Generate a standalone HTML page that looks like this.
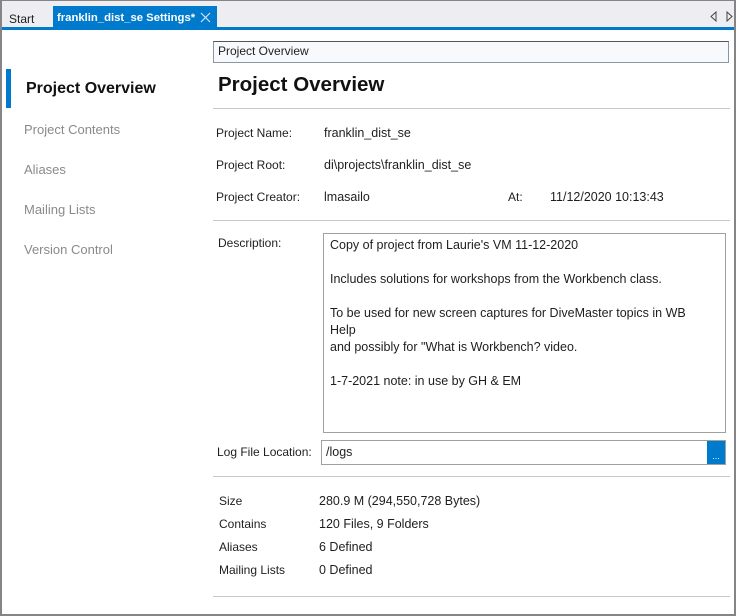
<!DOCTYPE html>
<html><head><style>
*{margin:0;padding:0;box-sizing:border-box}
body{width:736px;height:616px;position:relative;background:#fff;font-family:"Liberation Sans",sans-serif;color:#1e1e1e;overflow:hidden}
.a{position:absolute;white-space:nowrap}
.l{font-size:12px;line-height:15px}
.v{font-size:12.5px;line-height:15px}
.hr{position:absolute;left:213px;width:517px;height:1px;background:#c8c8c8}
.nav{position:absolute;left:24px;font-size:13px;color:#8a8a8a}
</style></head><body>
<div class="a" style="left:0;top:0;width:736px;height:616px;border:2px solid #858585;border-top:1px solid #858585"></div>
<div class="a" style="left:2px;top:1px;width:732px;height:26px;background:#eeeef2"></div>
<div class="a" style="left:2px;top:27px;width:732px;height:3px;background:#007acc"></div>
<div class="a l" style="left:9px;top:12px;color:#1e1e1e">Start</div>
<div class="a" style="left:53px;top:6px;width:164px;height:22px;background:#007acc"></div>
<div class="a" style="left:57px;top:12px;font-size:11.3px;font-weight:bold;color:#fff">franklin_dist_se Settings*</div>
<svg class="a" style="left:200px;top:12px" width="11" height="11"><path d="M1 1L10 10M10 1L1 10" stroke="#d0e6f5" stroke-width="1.2"/></svg>
<svg class="a" style="left:710px;top:11px" width="24" height="11"><path d="M6 1L1 5.5L6 10Z M17 1L22 5.5L17 10Z" fill="none" stroke="#444"/></svg>

<div class="a" style="left:6px;top:69px;width:5px;height:39px;background:#007acc"></div>
<div class="a" style="left:26px;top:80px;font-size:16px;font-weight:bold;color:#111">Project Overview</div>
<div class="nav" style="top:122px">Project Contents</div>
<div class="nav" style="top:162px">Aliases</div>
<div class="nav" style="top:202px">Mailing Lists</div>
<div class="nav" style="top:242px">Version Control</div>

<div class="a" style="left:213px;top:41px;width:516px;height:22px;background:#f7f9fc;border:1px solid #8a96a3;border-top-color:#555"></div>
<div class="a l" style="left:218px;top:44px">Project Overview</div>
<div class="a" style="left:218px;top:73px;font-size:20.5px;font-weight:bold;color:#111">Project Overview</div>
<div class="hr" style="top:108px"></div>

<div class="a l" style="left:216px;top:126px">Project Name:</div>
<div class="a v" style="left:324px;top:126px">franklin_dist_se</div>
<div class="a l" style="left:216px;top:158px">Project Root:</div>
<div class="a v" style="left:324px;top:158px">di\projects\franklin_dist_se</div>
<div class="a l" style="left:216px;top:190px">Project Creator:</div>
<div class="a v" style="left:324px;top:190px">lmasailo</div>
<div class="a l" style="left:508px;top:190px">At:</div>
<div class="a v" style="left:550px;top:190px">11/12/2020 10:13:43</div>
<div class="hr" style="top:220px"></div>

<div class="a l" style="left:218px;top:236px">Description:</div>
<div class="a" style="left:323px;top:233px;width:403px;height:200px;border:1px solid #a0a0a0"></div>
<div class="a v" style="left:330px;top:237px;line-height:17px;white-space:pre">Copy of project from Laurie's VM 11-12-2020

Includes solutions for workshops from the Workbench class.

To be used for new screen captures for DiveMaster topics in WB
Help
and possibly for "What is Workbench? video.

1-7-2021 note: in use by GH &amp; EM</div>

<div class="a l" style="left:217px;top:445px">Log File Location:</div>
<div class="a" style="left:321px;top:440px;width:405px;height:25px;border:1px solid #a0a0a0"></div>
<div class="a v" style="left:326px;top:445px">/logs</div>
<div class="a" style="left:707px;top:441px;width:18px;height:23px;background:#007acc;color:#fff;font-size:9px;text-align:center;line-height:30px">...</div>
<div class="hr" style="top:476px"></div>

<div class="a l" style="left:219px;top:494px">Size</div>
<div class="a v" style="left:319px;top:494px">280.9 M (294,550,728 Bytes)</div>
<div class="a l" style="left:219px;top:517px">Contains</div>
<div class="a v" style="left:319px;top:517px">120 Files, 9 Folders</div>
<div class="a l" style="left:219px;top:540px">Aliases</div>
<div class="a v" style="left:319px;top:540px">6 Defined</div>
<div class="a l" style="left:219px;top:563px">Mailing Lists</div>
<div class="a v" style="left:319px;top:563px">0 Defined</div>
<div class="hr" style="top:596px"></div>
</body></html>
